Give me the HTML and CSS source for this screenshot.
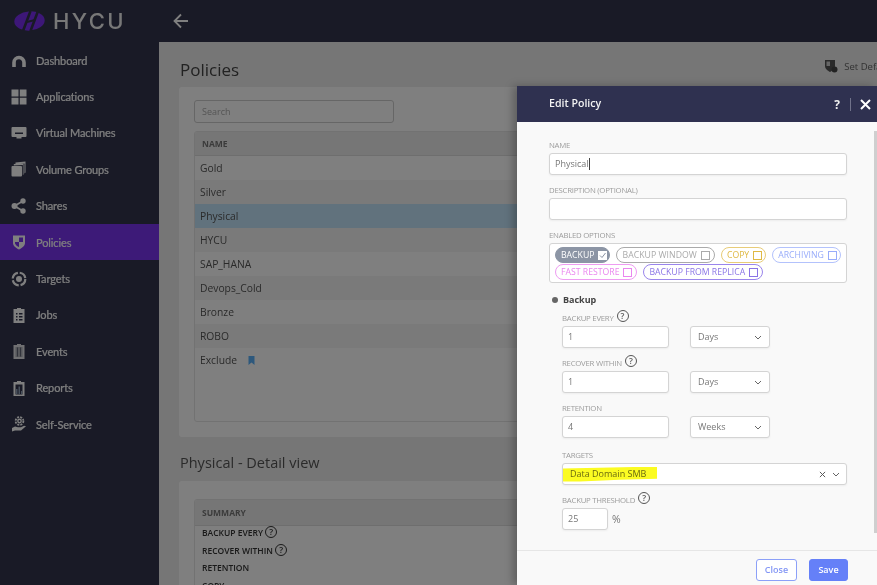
FILE: index.html
```html
<!DOCTYPE html>
<html lang="en">
<head>
<meta charset="utf-8">
<title>HYCU - Policies</title>
<link rel="stylesheet" href="styles.css">
</head>
<body>
<div class="app">
  <header class="topbar">
    <div class="brand">
      <svg class="logo" viewBox="0 0 31 21"><ellipse cx="15.500" cy="10" rx="15.200" ry="9.600" fill="#7a2ff0" transform="rotate(-4 15.500 10)"/><path d="M16.500 0L9 20M24 0L16.500 20" fill="none" stroke="#33354c" stroke-width="2.600"/><path d="M13 11L21 9" stroke="#33354c" stroke-width="2.200"/></svg>
      <span class="brand-name">HYCU</span>
    </div>
    <svg class="back" viewBox="0 0 16 16"><path d="M15 8H2M8 1.500L1.500 8L8 14.500" fill="none" stroke="#fff" stroke-width="1.800"/></svg>
  </header>
  <div class="shell">
    <nav class="sidebar">
      <a class="nav-item"><svg class="nav-icon" viewBox="0 0 16 16"><path d="M3 15V10.500a5 5 0 0 1 10 0V15" fill="none" stroke="#fff" stroke-width="3.600"/></svg>Dashboard</a>
      <a class="nav-item"><svg class="nav-icon" viewBox="0 0 16 16"><path d="M.5 .5h7v7h-7ZM8.800 .5h6.700v7H8.800ZM.5 8.800h7v6.700h-7ZM8.800 8.800h6.700v6.700H8.800Z"/></svg>Applications</a>
      <a class="nav-item"><svg class="nav-icon" viewBox="0 0 16 16"><path d="M1.500 2h13a1 1 0 0 1 1 1v8a1 1 0 0 1-1 1H10.500v1.500h-5V12h-4a1 1 0 0 1-1-1V3a1 1 0 0 1 1-1ZM4 7.500v1.500h8V7.500Z" fill-rule="evenodd"/></svg>Virtual Machines</a>
      <a class="nav-item"><svg class="nav-icon" viewBox="0 0 16 16"><path d="M4.500 1.500L14.500 .5V11.500L13.500 12.500V2.500L4.500 3.500Z"/><path d="M2.800 3L12.500 2.500V13.500L11.800 14V4L2.800 4.500Z"/><rect x=".5" y="5" width="10.500" height="10.500" rx="1"/></svg>Volume Groups</a>
      <a class="nav-item"><svg class="nav-icon" viewBox="0 0 16 16"><circle cx="12" cy="3" r="2.700"/><circle cx="3.500" cy="8" r="3"/><circle cx="12" cy="13" r="2.700"/><path d="M12 3L3.500 8L12 13" fill="none" stroke="#fff" stroke-width="1.700"/></svg>Shares</a>
      <a class="nav-item active"><svg class="nav-icon" viewBox="0 0 16 16"><path fill-rule="evenodd" d="M2 1.500h12V9c0 3-3 5-6 6.500C5 14 2 12 2 9ZM8 3.500V8H4V9.500C4.500 11 6.500 12.500 8 13V8h4V3.500Z"/></svg>Policies</a>
      <a class="nav-item"><svg class="nav-icon" viewBox="0 0 16 16"><circle cx="8" cy="8" r="3"/><circle cx="8" cy="8" r="6.300" fill="none" stroke="#fff" stroke-width="2.200" stroke-dasharray="8 1.900"/></svg>Targets</a>
      <a class="nav-item"><svg class="nav-icon" viewBox="0 0 16 16"><path fill-rule="evenodd" d="M6 2V1h4v1h3.500v14h-11V2ZM5 6v1.500h1.500V6ZM8 6v1.500h3.500V6ZM5 9v1.500h1.500V9ZM8 9v1.500h3.500V9ZM5 12v1.500h1.500V12ZM8 12v1.500h3.500V12Z"/></svg>Jobs</a>
      <a class="nav-item"><svg class="nav-icon" viewBox="0 0 16 16"><path d="M6 2V1h4v1h3.500v14h-11V2Z" opacity=".85"/><path d="M4.500 5h7M4.500 7h7M4.500 9h7M4.500 11h7M4.500 13h7M6.500 4.500v9M9.500 4.500v9" stroke="#33354c" stroke-width=".6"/></svg>Events</a>
      <a class="nav-item"><svg class="nav-icon" viewBox="0 0 16 16"><path fill-rule="evenodd" d="M6 2V1h4v1h3.500v14h-11V2ZM4.500 4.500v10h7v-10Z"/><path d="M5 14V9h1.500v5ZM7.500 14V6.500H9V14ZM10 14v-3h1.300v3Z" fill="#8fa1b8"/></svg>Reports</a>
      <a class="nav-item"><svg class="nav-icon" viewBox="0 0 16 16"><circle cx="8.500" cy="5" r="1.700" fill="none" stroke="#fff" stroke-width="1.400"/><circle cx="8.500" cy="5" r="3.900" fill="none" stroke="#fff" stroke-width="1.800" stroke-dasharray="2 1.100"/><path d="M1 12l3-1.500 3 .8h3l3-1.500 2 .5-5 4.200H4L1 15.500Z"/></svg>Self-Service</a>
    </nav>
    <main class="main">
      <div class="content">
        <div class="title-row">
          <h1 class="page-title">Policies</h1>
          <span class="set-default"><svg class="sd-icon" viewBox="0 0 14 14"><path d="M1 1h10v6c0 3-2.500 4.500-5 6C3.500 11.500 1 10 1 7Z" fill="#555"/><path d="M6 2.500V7H2.500V2.500Z" fill="#ccc"/><circle cx="10.500" cy="10.500" r="3" fill="#444"/></svg>Set Default</span>
        </div>
        <section class="card">
          <div class="search">Search</div>
          <div class="table policies">
            <div class="table-head">NAME</div>
            <div class="row">Gold</div>
            <div class="row alt">Silver</div>
            <div class="row selected">Physical</div>
            <div class="row alt">HYCU</div>
            <div class="row">SAP_HANA</div>
            <div class="row alt">Devops_Cold</div>
            <div class="row">Bronze</div>
            <div class="row alt">ROBO</div>
            <div class="row">Exclude <svg class="bookmark" viewBox="0 0 7 9"><path d="M.5 0h6v9L3.500 6.500.5 9Z"/></svg></div>
          </div>
        </section>
        <h2 class="section-title">Physical - Detail view</h2>
        <section class="card detail">
          <div class="table">
            <div class="table-head tall">SUMMARY</div>
            <div class="detail-list">
              <div class="detail-row">BACKUP EVERY <span class="help dim">?</span></div>
              <div class="detail-row">RECOVER WITHIN <span class="help dim">?</span></div>
              <div class="detail-row">RETENTION</div>
              <div class="detail-row">COPY</div>
            </div>
          </div>
        </section>
      </div>
    </main>
  </div>
  <div class="overlay"></div>
  <aside class="modal">
    <div class="modal-head">
      <span class="modal-title">Edit Policy</span>
      <span class="modal-actions">
        <span class="q">?</span><span class="sep"></span>
        <svg class="x" viewBox="0 0 11 11"><path d="M1 1L10 10M10 1L1 10" stroke="#fff" stroke-width="2"/></svg>
      </span>
    </div>
    <div class="modal-body">
      <div class="scrollbar"></div>
      <div class="field">
        <div class="label">NAME</div>
        <div class="input">Physical<span class="caret"></span></div>
      </div>
      <div class="field">
        <div class="label">DESCRIPTION (OPTIONAL)</div>
        <div class="input"></div>
      </div>
      <div class="field">
        <div class="label">ENABLED OPTIONS</div>
        <div class="chips">
          <span class="chip on">BACKUP <i class="box"><svg viewBox="0 0 9 9"><path d="M2 4.500L4 6.500L7.500 2" fill="none" stroke="#8a93a3" stroke-width="1"/></svg></i></span>
          <span class="chip gray">BACKUP WINDOW <i class="box"></i></span>
          <span class="chip gold">COPY <i class="box"></i></span>
          <span class="chip blue">ARCHIVING <i class="box"></i></span>
          <span class="chip pink">FAST RESTORE <i class="box"></i></span>
          <span class="chip violet">BACKUP FROM REPLICA <i class="box"></i></span>
        </div>
      </div>
      <div class="group-title"><span class="dot"></span>Backup</div>
      <div class="group">
        <div class="field-row">
          <div class="label">BACKUP EVERY <span class="help">?</span></div>
          <div class="pair">
            <div class="input num">1</div>
            <div class="input select">Days<svg class="chev" viewBox="0 0 8 5"><path d="M1 1L4 4L7 1" fill="none" stroke="#666" stroke-width="1"/></svg></div>
          </div>
        </div>
        <div class="field-row">
          <div class="label">RECOVER WITHIN <span class="help">?</span></div>
          <div class="pair">
            <div class="input num">1</div>
            <div class="input select">Days<svg class="chev" viewBox="0 0 8 5"><path d="M1 1L4 4L7 1" fill="none" stroke="#666" stroke-width="1"/></svg></div>
          </div>
        </div>
        <div class="field-row">
          <div class="label">RETENTION</div>
          <div class="pair">
            <div class="input num">4</div>
            <div class="input select">Weeks<svg class="chev" viewBox="0 0 8 5"><path d="M1 1L4 4L7 1" fill="none" stroke="#666" stroke-width="1"/></svg></div>
          </div>
        </div>
        <div class="field-row targets">
          <div class="label">TARGETS</div>
          <div class="input target"><span class="marked">Data Domain SMB</span>
            <svg class="clear" viewBox="0 0 8 8"><path d="M1 1L7 7M7 1L1 7" stroke="#555" stroke-width="1.100"/></svg>
            <svg class="chev tight" viewBox="0 0 8 5"><path d="M1 1L4 4L7 1" fill="none" stroke="#666" stroke-width="1"/></svg>
          </div>
        </div>
        <div class="field-row">
          <div class="label">BACKUP THRESHOLD <span class="help">?</span></div>
          <div class="pair threshold">
            <div class="input small">25</div><span class="pct">%</span>
          </div>
        </div>
      </div>
    </div>
    <div class="modal-foot">
      <button class="btn ghost">Close</button>
      <button class="btn primary">Save</button>
    </div>
  </aside>
</div>
</body>
</html>
```
FILE: styles.css
```css
* { box-sizing: border-box; }
html, body { margin: 0; height: 100%; overflow: hidden; }
body { font-family: "Open Sans", "Liberation Sans", sans-serif; color: #666; }
.app { position: relative; width: 100%; height: 100vh; overflow: hidden; background: #ececec; filter: blur(.35px); }

.topbar { height: 42px; background: #33354c; display: flex; align-items: center; }
.brand { width: 159px; display: flex; align-items: center; }
.logo { width: 31px; height: 21px; margin-left: 14px; }
.brand-name { margin-left: 8px; font-family: Inter, sans-serif; font-size: 22px; line-height: 24px; font-weight: 500; letter-spacing: 2.4px; color: #f0f0f0; }
.back { width: 16px; height: 16px; margin-left: 14px; }

.shell { display: flex; height: calc(100vh - 42px); }
.sidebar { width: 159px; flex: none; background: #33354c; }
.nav-item { height: 36.4px; display: flex; align-items: center; padding-left: 11px; font-family: Lato, sans-serif; font-size: 11px; font-weight: 400; letter-spacing: -.12px; -webkit-text-stroke: .2px #fff; color: #fff; }
.nav-item.active { background: #7a35f0; }
.nav-icon { width: 16px; height: 16px; margin-right: 9px; fill: #fff; flex: none; }

.main { flex: 1; min-width: 0; overflow: hidden; padding-left: 20px; }
.content { width: 710px; }
.title-row { display: flex; justify-content: space-between; align-items: center; padding-top: 16px; margin-bottom: 5px; height: 40px; }
.page-title { margin: 0 0 0 1px; font-size: 17px; line-height: 24px; font-weight: 400; color: #444; }
.set-default { display: flex; align-items: center; font-size: 9.5px; color: #666; white-space: nowrap; margin: -8px -4px 0 0; }
.sd-icon { width: 14px; height: 14px; margin-right: 6px; }

.card { background: #fff; border-radius: 3px; padding: 13px 15px 15px; height: 350px; }
.search { width: 200px; height: 23px; border: 1px solid #ccc; border-radius: 3px; background: #fff; font-size: 9px; line-height: 21px; padding-left: 7px; color: #aaa; margin-bottom: 8px; }
.table { border: 1px solid #e4e4e4; border-radius: 3px; overflow: hidden; }
.policies { height: 291px; }
.table-head { height: 24px; background: #ececec; border-bottom: 1px solid #ddd; font-size: 8.5px; font-weight: 700; line-height: 24px; color: #777; padding-left: 7px; }
.table-head.tall { height: 26px; line-height: 26px; }
.row { height: 24px; line-height: 24px; padding-left: 5px; font-size: 10.3px; color: #555; background: #fff; }
.row.alt { background: #f5f5f5; }
.row.selected { background: #c2e4fb; }
.bookmark { width: 7px; height: 9px; margin-left: 8px; fill: #5ab0f8; vertical-align: -1px; }

.section-title { margin: 14px 0 6px 1px; font-size: 14.5px; line-height: 24px; font-weight: 400; color: #555; }
.card.detail { padding-top: 18px; height: 130px; }
.detail-list { padding: 0 7px; margin-top: -2px; }
.detail-row { height: 17.5px; line-height: 17.5px; font-size: 8.5px; font-weight: 600; color: #333; white-space: nowrap; }

.overlay { position: absolute; inset: 0; background: rgba(0, 0, 0, .5); }

.modal { position: absolute; left: 517px; right: 0; top: 86px; bottom: 0; background: #f9f9f9; display: flex; flex-direction: column; box-shadow: -4px 0 8px rgba(0, 0, 0, .25); }
.modal-head { height: 36px; flex: none; background: #2f3150; display: flex; align-items: center; justify-content: space-between; padding-left: 32px; }
.modal-title { font-size: 10.6px; font-weight: 600; color: #f2f2f2; padding-bottom: 2px; }
.modal-actions { display: flex; align-items: center; }
.q { font-size: 12px; font-weight: 700; color: #eee; }
.sep { width: 1px; height: 13px; background: #70728a; margin: 0 9px 0 10px; }
.x { width: 11px; height: 11px; margin-right: 6px; }

.modal-body { position: relative; flex: 1; min-height: 0; padding: 17px 30px 0 32px; }
.scrollbar { position: absolute; right: 0; top: 9px; width: 3px; height: 402px; background: #cfcfcf; }
.field { margin-bottom: 9px; }
.label { height: 14px; font-size: 7.8px; letter-spacing: -.25px; line-height: 12px; color: #9c9c9c; white-space: nowrap; display: flex; align-items: flex-start; gap: 3px; }
.input { height: 22px; background: #fff; border: 1px solid #d4d4d4; border-radius: 3px; box-shadow: 0 1px 2px rgba(0, 0, 0, .05); font-size: 9px; line-height: 20px; padding-left: 5px; color: #777; }
.caret { display: inline-block; width: 1px; height: 12px; background: #444; vertical-align: -3px; }
.chips { height: 40px; background: #fff; border: 1px solid #d4d4d4; border-radius: 3px; padding: 3px 1px 3px 5px; display: flex; flex-wrap: wrap; align-content: flex-start; gap: 1px 6px; }
.chip { height: 16px; border: 1px solid; border-radius: 8px; font-size: 8.7px; line-height: 14px; padding: 0 4px 0 5px; display: inline-flex; align-items: center; gap: 4px; white-space: nowrap; }
.box { width: 9px; height: 9px; border: 1px solid currentColor; display: block; font-style: normal; }
.box svg { display: block; width: 9px; height: 9px; margin: -1px 0 0 -1px; }
.chip.on { background: #8c95a5; border-color: #8c95a5; color: #fff; padding-right: 2px; }
.chip.on .box { background: #fff; border-color: #fff; }
.chip.gray { border-color: #aaa; color: #aaa; letter-spacing: .05px; }
.chip.gold { border-color: #e8cc78; color: #dfb944; padding-right: 3px; }
.chip.blue { border-color: #b3c2fc; color: #98acfa; padding-right: 3px; }
.chip.pink { border-color: #ee9cf2; color: #ea86ef; }
.chip.violet { border-color: #9a85ec; color: #8a74e6; }

.group-title { height: 15px; padding-top: 1px; display: flex; align-items: center; font-size: 9px; font-weight: 700; color: #444; line-height: 14px; }
.dot { width: 6px; height: 6px; border-radius: 50%; background: #666; margin: 0 5px 0 3px; }
.group { padding-left: 13px; margin-top: 5px; }
.field-row { margin-bottom: 9px; }
.field-row.targets { margin-top: 11px; }
.pair { display: flex; gap: 21px; }
.num { width: 107px; }
.select { width: 80px; display: flex; align-items: center; justify-content: space-between; padding: 0 7px; color: #777; }
.chev { width: 8px; height: 5px; flex: none; }
.target { display: flex; align-items: center; padding-left: 0; }
.marked { color: #6a6a10; background: #fbfb22; clip-path: polygon(0 14%, 100% 0, 100% 82%, 60% 88%, 18% 100%, 0 100%); padding: 0 11px 1px 7px; height: 15px; line-height: 13px; }
.clear { width: 7px; height: 7px; margin-left: auto; }
.chev.tight { margin: 0 6px 0 6px; }
.threshold { gap: 4px; align-items: center; }
.small { width: 46px; }
.pct { font-size: 10.5px; color: #777; }
.help { width: 12px; height: 12px; border: 1.2px solid #555; border-radius: 50%; color: #555; font-size: 8.5px; font-weight: 600; line-height: 10px; letter-spacing: 0; text-align: center; display: inline-block; margin-top: -2px; flex: none; }
.help.dim { border-color: #333; color: #333; vertical-align: 1px; margin-top: 0; }

.modal-foot { height: 35px; flex: none; display: flex; justify-content: flex-end; align-items: center; gap: 12px; padding-right: 29px; padding-top: 3px; border-top: 1px solid #e6e6e6; }
.btn { height: 22px; border-radius: 3px; font-family: inherit; font-size: 9px; font-weight: 600; padding: 0; }
.ghost { width: 41px; background: #fff; border: 1px solid #8ca0f8; color: #8396f5; }
.primary { width: 39px; background: #6580f8; border: 1px solid #6580f8; color: #fff; }
```
